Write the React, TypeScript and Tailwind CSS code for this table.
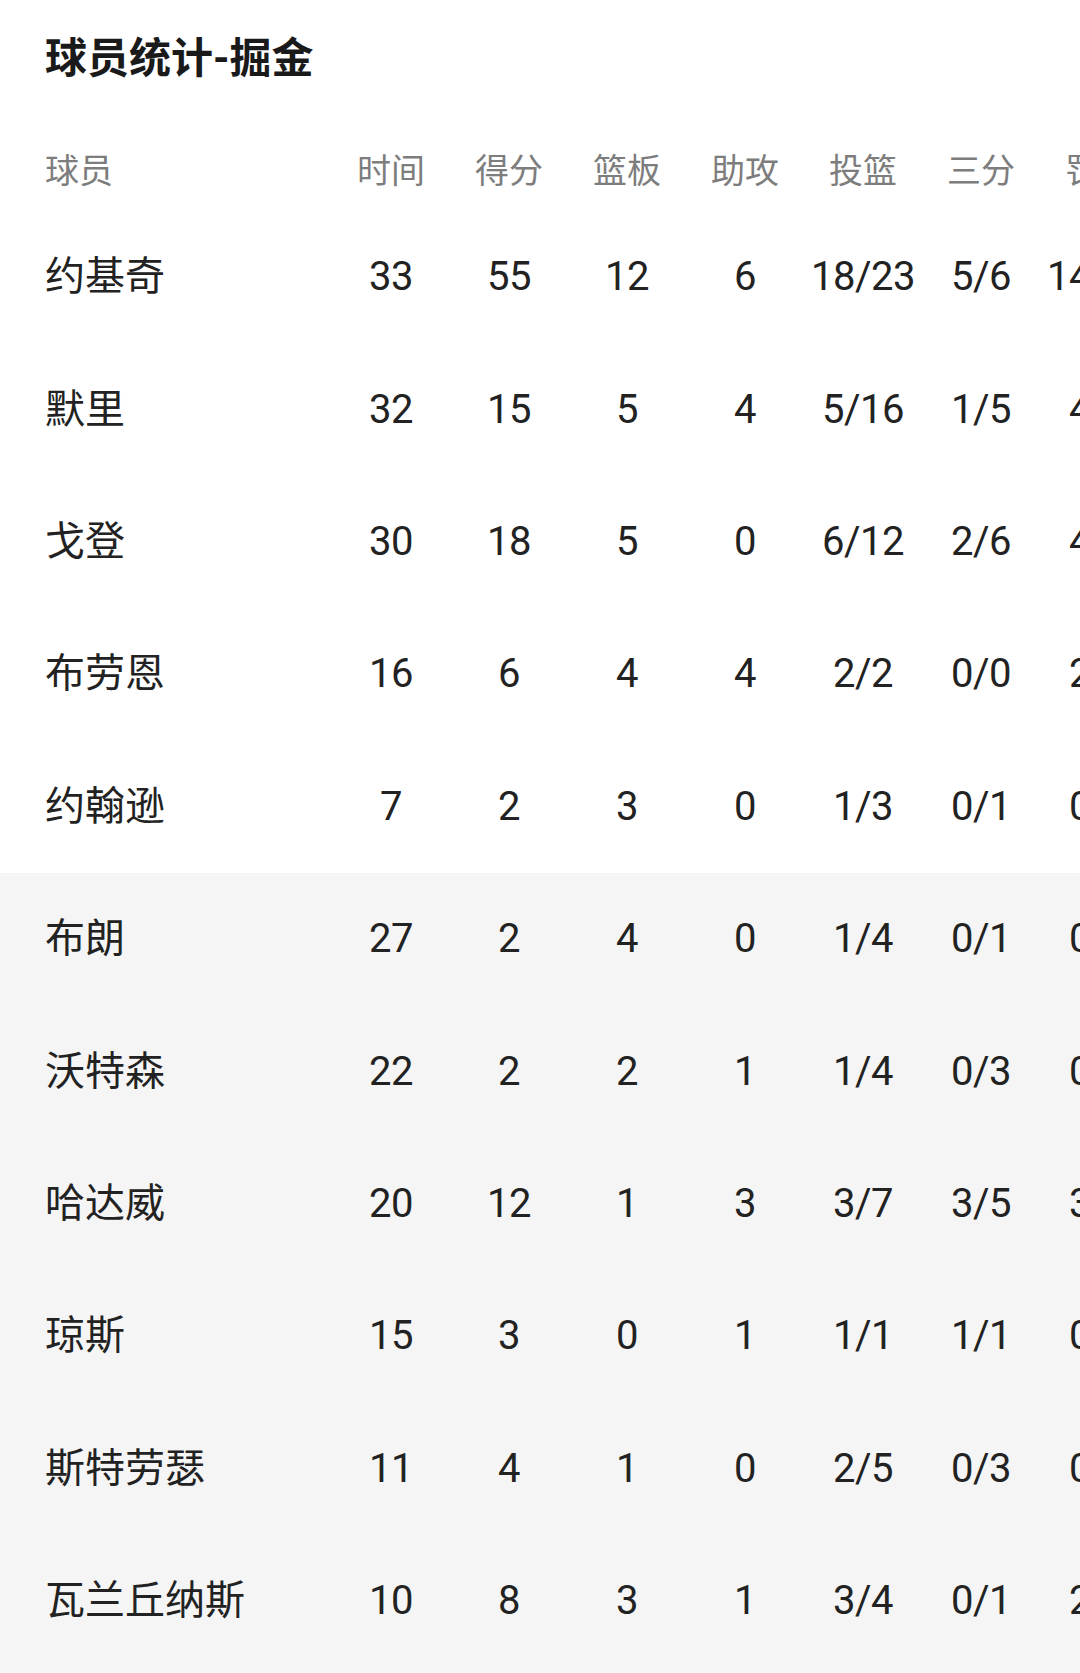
import React from 'react';

type Player = {
  name: string;
  min: number;
  pts: number;
  reb: number;
  ast: number;
  fg: string;
  tp: string;
  ft: string;
};

const starters: Player[] = [
  { name: '约基奇', min: 33, pts: 55, reb: 12, ast: 6, fg: '18/23', tp: '5/6', ft: '14/16' },
  { name: '默里', min: 32, pts: 15, reb: 5, ast: 4, fg: '5/16', tp: '1/5', ft: '4/4' },
  { name: '戈登', min: 30, pts: 18, reb: 5, ast: 0, fg: '6/12', tp: '2/6', ft: '4/4' },
  { name: '布劳恩', min: 16, pts: 6, reb: 4, ast: 4, fg: '2/2', tp: '0/0', ft: '2/2' },
  { name: '约翰逊', min: 7, pts: 2, reb: 3, ast: 0, fg: '1/3', tp: '0/1', ft: '0/0' },
];

const bench: Player[] = [
  { name: '布朗', min: 27, pts: 2, reb: 4, ast: 0, fg: '1/4', tp: '0/1', ft: '0/0' },
  { name: '沃特森', min: 22, pts: 2, reb: 2, ast: 1, fg: '1/4', tp: '0/3', ft: '0/0' },
  { name: '哈达威', min: 20, pts: 12, reb: 1, ast: 3, fg: '3/7', tp: '3/5', ft: '3/3' },
  { name: '琼斯', min: 15, pts: 3, reb: 0, ast: 1, fg: '1/1', tp: '1/1', ft: '0/0' },
  { name: '斯特劳瑟', min: 11, pts: 4, reb: 1, ast: 0, fg: '2/5', tp: '0/3', ft: '0/0' },
  { name: '瓦兰丘纳斯', min: 10, pts: 8, reb: 3, ast: 1, fg: '3/4', tp: '0/1', ft: '2/2' },
];

const headers = ['时间', '得分', '篮板', '助攻', '投篮', '三分', '罚球'];

const Row: React.FC<{ p: Player }> = ({ p }) => {
  const stats = [p.min, p.pts, p.reb, p.ast, p.fg, p.tp, p.ft];
  return (
    <div className="flex h-[132.4px] items-center pl-[45px] text-[40px] text-[#222222]">
      <div className="w-[287px] shrink-0 whitespace-nowrap">{p.name}</div>
      {stats.map((s, i) => (
        <div key={i} className="w-[118px] shrink-0 whitespace-nowrap text-center tracking-[-0.5px]">
          {s}
        </div>
      ))}
    </div>
  );
};

export default function App() {
  return (
    <div className="h-[1673px] w-[1080px] overflow-hidden bg-white font-['Roboto','Noto_Sans_CJK_SC',sans-serif]">
      <h1 className="pl-[45px] pt-[34px] text-[42px] font-bold leading-[50px] text-[#1a1a1a]">
        球员统计-掘金
      </h1>

      <div className="mt-[47px] flex h-[80px] items-center pl-[45px] text-[34px] text-[#7d7d7d]">
        <div className="w-[287px] shrink-0">球员</div>
        {headers.map((h) => (
          <div key={h} className="w-[118px] shrink-0 whitespace-nowrap text-center">
            {h}
          </div>
        ))}
      </div>

      <div>
        {starters.map((p) => (
          <Row key={p.name} p={p} />
        ))}
      </div>

      <div className="bg-[#f5f5f5] pb-[40px]">
        {bench.map((p) => (
          <Row key={p.name} p={p} />
        ))}
      </div>
    </div>
  );
}
